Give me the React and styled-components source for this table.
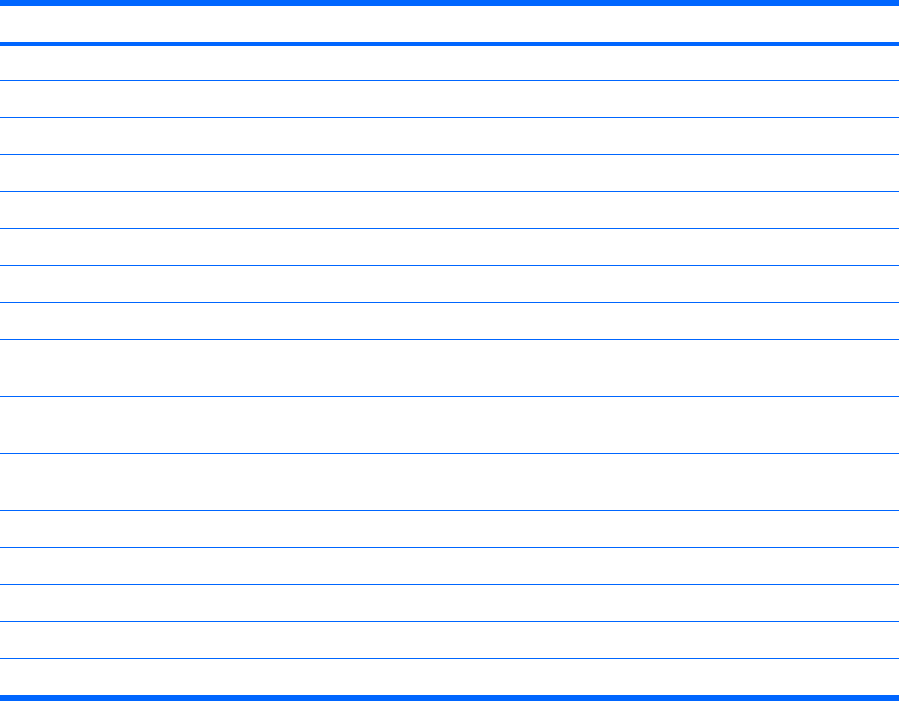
import React from "react";
import styled, { createGlobalStyle } from "styled-components";

const Global = createGlobalStyle`
  html, body { margin: 0; padding: 0; background: #ffffff; }
  body { font-family: "Liberation Sans", Arial, sans-serif; font-size: 13px; color: #000; }
`;

const BLUE = "#0066ff";

const Table = styled.div`
  display: flex;
  flex-direction: column;
  width: 899px;
`;

const HeaderRow = styled.div`
  display: grid;
  grid-template-columns: 1fr 1fr;
  height: 36px;
  border-top: 6px solid ${BLUE};
  border-bottom: 4px solid ${BLUE};
`;

const Row = styled.div`
  display: grid;
  grid-template-columns: 1fr 1fr;
  height: ${(p) => p.$h}px;
  border-bottom: ${(p) => (p.$last ? 6 : 1)}px solid ${BLUE};
`;

const Cell = styled.div`
  padding: 4px 8px;
`;

const heights = [34, 36, 36, 36, 36, 36, 36, 36, 56, 56, 56, 36, 36, 36, 36, 36];

export default function App() {
  return (
    <>
      <Global />
      <Table>
        <HeaderRow>
          <Cell />
          <Cell />
        </HeaderRow>
        {heights.map((h, i) => (
          <Row key={i} $h={h} $last={i === heights.length - 1}>
            <Cell />
            <Cell />
          </Row>
        ))}
      </Table>
    </>
  );
}
